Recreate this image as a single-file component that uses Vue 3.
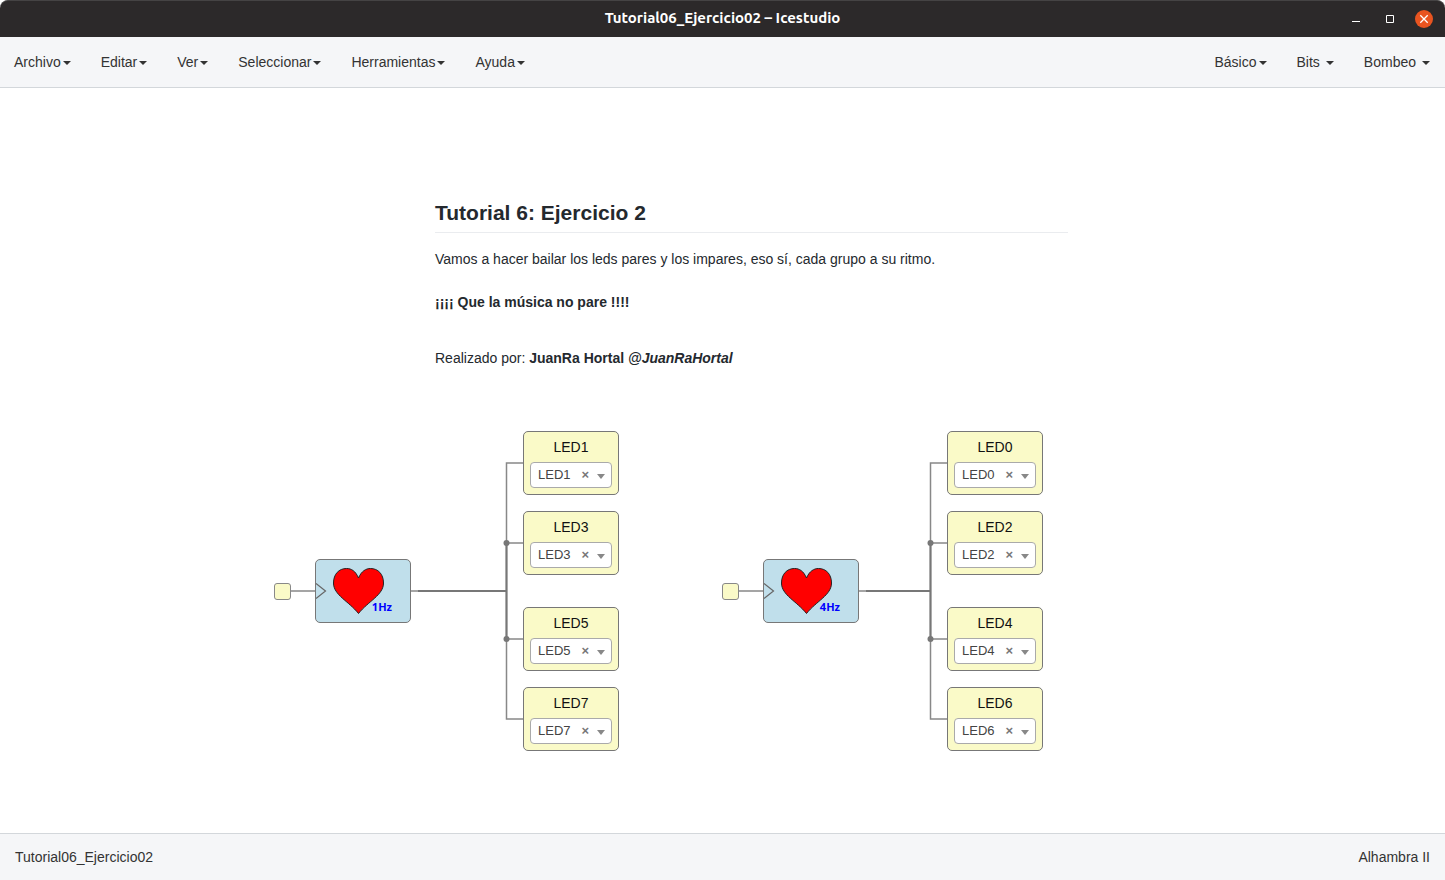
<script setup>
import { ref } from 'vue'

const menus = ['Archivo', 'Editar', 'Ver', 'Seleccionar', 'Herramientas', 'Ayuda']
const collections = [
  { label: 'Básico', spaced: false },
  { label: 'Bits', spaced: true },
  { label: 'Bombeo', spaced: true },
]

const rows = [343, 423, 519, 599]
const makeGroup = (id, x, ledX, rate, names) => ({
  id,
  x,
  ledX,
  rate,
  leds: names.map((name, i) => ({ name, pin: name, top: rows[i] })),
})
const groups = ref([
  makeGroup('odd', 274, 523, '1Hz', ['LED1', 'LED3', 'LED5', 'LED7']),
  makeGroup('even', 722, 947, '4Hz', ['LED0', 'LED2', 'LED4', 'LED6']),
])
const pins = ['LED0', 'LED1', 'LED2', 'LED3', 'LED4', 'LED5', 'LED6', 'LED7']

const at = (left, top) => ({ left: left + 'px', top: top + 'px' })
</script>

<template>
  <div class="window">
    <header class="titlebar">
      <span></span>
      <h1>Tutorial06_Ejercicio02 – Icestudio</h1>
      <div class="controls">
        <button type="button" aria-label="Minimizar">
          <svg width="18" height="18" viewBox="0 0 18 18"><path d="M5 11.5h8" stroke="#fff" /></svg>
        </button>
        <button type="button" aria-label="Maximizar">
          <svg width="18" height="18" viewBox="0 0 18 18"><path d="M5.5 5.5h7v7h-7z" fill="none" stroke="#fff" /></svg>
        </button>
        <button type="button" aria-label="Cerrar">
          <svg width="18" height="18" viewBox="0 0 18 18">
            <circle cx="9" cy="9" r="9" fill="#e95420" />
            <path d="M5.3 5.3l7.4 7.4M12.7 5.3l-7.4 7.4" stroke="#fff" stroke-width="1.3" />
          </svg>
        </button>
      </div>
    </header>

    <nav class="menubar">
      <div class="menu-group">
        <button v-for="label in menus" :key="label" type="button">{{ label }}<i class="caret"></i></button>
      </div>
      <div class="menu-group">
        <button v-for="item in collections" :key="item.label" type="button" :class="{ spaced: item.spaced }">{{ item.label }}<i class="caret"></i></button>
      </div>
    </nav>

    <main class="canvas">
      <article class="readme" :style="at(435, 113)">
        <h2>Tutorial 6: Ejercicio 2</h2>
        <p>Vamos a hacer bailar los leds pares y los impares, eso sí, cada grupo a su ritmo.</p>
        <p><strong>¡¡¡¡ Que la música no pare !!!!</strong></p>
        <p class="author">Realizado por: <strong>JuanRa Hortal <em>@JuanRaHortal</em></strong></p>
      </article>

      <svg class="wires" width="100%" height="100%" fill="none" aria-hidden="true">
        <g v-for="g in groups" :key="g.id">
          <path :d="`M${g.x + 17} 503H${g.x + 41}M${g.x + 137} 503H${g.ledX - 17}`" />
          <path :d="`M${g.ledX} 375H${g.ledX - 16.5}V631H${g.ledX}M${g.ledX - 17} 455H${g.ledX}M${g.ledX - 17} 551H${g.ledX}`" />
          <path class="trunk" :d="`M${g.x + 144} 503H${g.ledX - 16}M${g.ledX - 16.5} 455V551`" />
          <circle :cx="g.ledX - 16.5" cy="455" r="3" />
          <circle :cx="g.ledX - 16.5" cy="551" r="3" />
        </g>
      </svg>

      <template v-for="g in groups" :key="g.id">
        <div class="clock-source" :style="at(g.x, 495)"></div>
        <div class="heart" :style="at(g.x + 41, 471)">
          <svg width="94" height="62" viewBox="0 0 94 62" aria-hidden="true">
            <path d="M0 23.5L9.500 31L0 38.500" fill="none" stroke="#666" stroke-width="1.2" />
            <path d="M42.500 18C45.500 11 50 8.500 54.500 8.500C62 8.500 67.500 14 67.500 23C67.500 35 52.500 41 42.500 53.500C32.500 41 17.500 35 17.500 23C17.500 14 23 8.500 30.500 8.500C35.500 8.500 39.500 11 42.500 18Z" fill="#f00" stroke="#222" />
          </svg>
          <span>{{ g.rate }}</span>
        </div>
        <section v-for="led in g.leds" :key="led.name" class="led" :style="at(g.ledX, led.top)">
          <label :for="led.name">{{ led.name }}</label>
          <div class="picker">
            <select :id="led.name" v-model="led.pin">
              <option v-for="pin in pins" :key="pin" :value="pin">{{ pin }}</option>
            </select>
            <button type="button" :aria-label="'Quitar ' + led.name" @click="led.pin = ''">×</button>
            <i class="arrow"></i>
          </div>
        </section>
      </template>
    </main>

    <footer class="statusbar">
      <span>Tutorial06_Ejercicio02</span>
      <span>Alhambra II</span>
    </footer>
  </div>
</template>

<style>
body {
  background: #fff;
}
</style>

<style scoped>
* {
  box-sizing: border-box;
}
.window {
  display: flex;
  flex-direction: column;
  min-height: 100vh;
  font-family: "Liberation Sans", Arial, sans-serif;
  font-size: 14px;
  line-height: 20px;
  color: #333;
}
button {
  padding: 0;
  border: 0;
  background: none;
  font: inherit;
  color: inherit;
}
.titlebar {
  display: grid;
  grid-template-columns: 1fr auto 1fr;
  align-items: center;
  height: 37px;
  padding: 0 12px;
  border-top: 1px solid #454344;
  border-radius: 8px 8px 0 0;
  background: #2c292a;
}
h1 {
  margin: 0;
  padding-bottom: 2px;
  font: bold 15px/20px Ubuntu, "Noto Sans", sans-serif;
  color: #fff;
}
.controls {
  display: flex;
  justify-content: flex-end;
  gap: 16px;
}
.controls svg {
  display: block;
}
.menubar {
  display: flex;
  justify-content: space-between;
  align-items: center;
  height: 51px;
  padding: 0 15px 0 14px;
  border-bottom: 1px solid #d3d7db;
  background: #f5f6f8;
}
.menu-group {
  display: flex;
  gap: 30px;
}
.caret {
  display: inline-block;
  margin-left: 2px;
  vertical-align: middle;
  border: 4px solid transparent;
  border-top-color: #333;
  border-bottom: 0;
}
.spaced .caret {
  margin-left: 6px;
}
.canvas {
  position: relative;
  flex: 1;
  min-height: 700px;
  overflow: hidden;
  background: #fff;
}
.readme {
  position: absolute;
  width: 633px;
  color: #24292e;
}
.readme h2 {
  margin: 0 0 16px;
  padding-bottom: 7px;
  border-bottom: 1px solid #eaecef;
  font-size: 21px;
  line-height: 24px;
}
.readme p {
  margin: 0 0 22px;
  line-height: 21px;
}
.readme .author {
  margin-top: 35px;
}
.wires {
  position: absolute;
  inset: 0;
}
.wires path {
  stroke: #888;
  stroke-width: 1.5;
}
.wires .trunk {
  stroke: #777;
  stroke-width: 2;
}
.wires circle {
  fill: #777;
}
.clock-source {
  position: absolute;
  width: 17px;
  height: 17px;
  border: 1px solid #888;
  border-radius: 3px;
  background: #fafac8;
}
.heart {
  position: absolute;
  width: 96px;
  height: 64px;
  border: 1px solid #777;
  border-radius: 5px;
  background: #c0dfeb;
}
.heart svg {
  display: block;
}
.heart span {
  position: absolute;
  right: 18px;
  bottom: 7px;
  font: bold 11px/16px "Noto Sans", sans-serif;
  color: #00f;
}
.led {
  position: absolute;
  display: flex;
  flex-direction: column;
  width: 96px;
  height: 64px;
  padding: 5px 6px 6px;
  border: 1px solid #777;
  border-radius: 5px;
  background: #fafac8;
  color: #111;
}
.led label {
  margin-bottom: 5px;
  text-align: center;
}
.picker {
  display: flex;
  align-items: center;
  height: 26px;
  padding: 0 6px 0 7px;
  border: 1px solid #aaa;
  border-radius: 4px;
  background: #fff;
}
.picker select {
  flex: 1;
  min-width: 0;
  padding: 0;
  border: 0;
  appearance: none;
  background: none;
  font: 13px/24px "Liberation Sans", Arial, sans-serif;
  color: #444;
}
.picker button {
  margin-right: 8px;
  font-size: 13px;
  font-weight: bold;
  color: #777;
}
.arrow {
  margin-top: 2px;
  border: 4px solid transparent;
  border-top: 5px solid #888;
  border-bottom: 0;
}
.statusbar {
  display: flex;
  justify-content: space-between;
  align-items: center;
  height: 47px;
  padding: 0 15px;
  border-top: 1px solid #d3d7db;
  background: #f5f6f8;
}
</style>
